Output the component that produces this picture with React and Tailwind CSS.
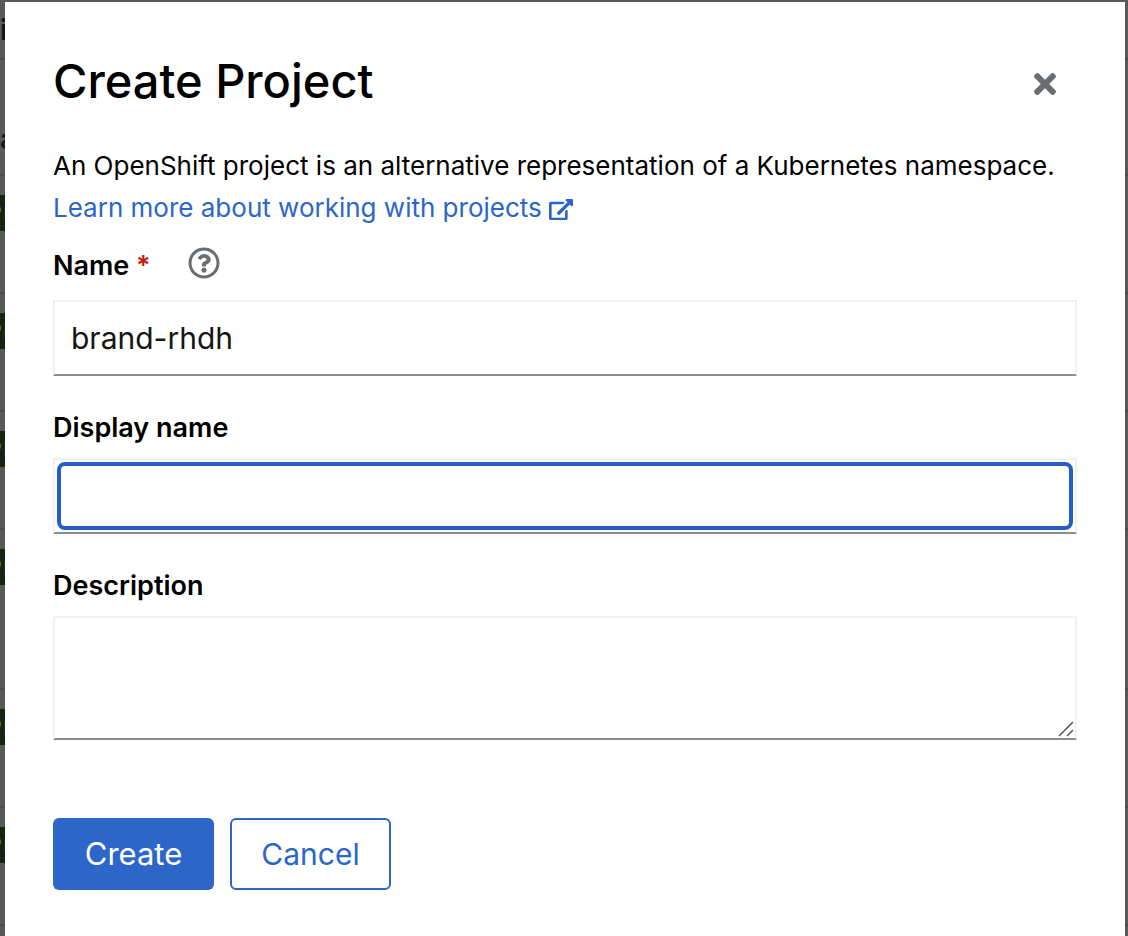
import { FaRegQuestionCircle, FaTimes } from "react-icons/fa";

const rowHeights = ["h-[118px]", "h-[118px]", "h-[118px]", "h-40", "h-[118px]", "h-[118px]", "h-[118px]"];

const boxClass = "w-full border-2 border-t-[#f0f0f0] border-r-[#f0f0f0] border-l-[#f0f0f0] border-b-[#8a8d90] bg-white";
const fieldClass = `block ${boxClass} px-4 text-[30px] text-[#151515] outline-none`;
const labelClass = "text-[27px] leading-[42px] font-semibold text-black";

function ExternalLinkIcon() {
  return (
    <svg
      aria-hidden="true"
      viewBox="0 0 576 512"
      fill="currentColor"
      className="inline-block w-6 align-[-3px]"
    >
      <path d="M576 24v127.984c0 21.461-25.96 31.98-40.971 16.971l-35.707-35.709-243.523 243.523c-9.373 9.373-24.568 9.373-33.941 0l-22.627-22.627c-9.373-9.373-9.373-24.569 0-33.941L442.756 76.676l-35.703-35.705C391.982 25.9 402.656 0 424.024 0H552c13.255 0 24 10.745 24 24zM407.029 270.794l-16 16A23.999 23.999 0 0 0 384 303.765V448H64V128h264a24.003 24.003 0 0 0 16.97-7.029l16-16C376.089 89.851 365.381 64 344 64H48C21.49 64 0 85.49 0 112v352c0 26.51 21.49 48 48 48h352c26.51 0 48-21.49 48-48V287.764c0-21.382-25.852-32.09-40.971-16.97z" />
    </svg>
  );
}

function PageEdge({ side }) {
  const left = side === "left";
  return (
    <div
      aria-hidden="true"
      className={
        left
          ? "w-[5px] shrink-0 overflow-hidden text-[28px] font-semibold text-[#151515]"
          : "w-[3px] shrink-0 overflow-hidden"
      }
    >
      <div className="flex h-14 items-center leading-none">{left && "i"}</div>
      <div className="flex h-[116px] items-end border-t-2 border-[#4b4b4b] pb-[21px] leading-none">
        {left && "a"}
      </div>
      {rowHeights.map((height, i) => (
        <div key={i} className={`${height} border-t-2 border-[#4b4b4b] pt-[19px]`}>
          {left && i < 6 && (
            <div className="flex h-9 items-center justify-center gap-px bg-[#16240f] text-[22px] font-normal text-[#6c6c6c]">
              <span>P</span>
              <span>R</span>
            </div>
          )}
        </div>
      ))}
    </div>
  );
}

export default function App() {
  return (
    <div className="flex h-screen overflow-hidden bg-[#595959] pt-0.5 font-['Inter',sans-serif]">
      <PageEdge side="left" />
      <div role="dialog" aria-labelledby="title" className="min-w-0 flex-1 bg-white px-12 pt-12">
        <header className="flex items-end justify-between">
          <h1 id="title" className="text-[47px] leading-[62px] font-medium text-black">
            Create Project
          </h1>
          <button type="button" aria-label="Close" className="flex h-14 w-16 items-center justify-center text-[#6a6e73]">
            <FaTimes size={32} />
          </button>
        </header>
        <p className="mt-[33px] text-[26px] leading-[42px] text-black">
          An OpenShift project is an alternative representation of a Kubernetes namespace.{" "}
          <a href="#projects" className="block text-[#2b66c8]">
            Learn more about working with projects <ExternalLinkIcon />
          </a>
        </p>
        <form>
          <div className="mt-4 mb-[13px] flex items-center">
            <label htmlFor="name" className={labelClass}>
              Name <span className="text-[#c9190b]">*</span>
            </label>
            <button type="button" aria-label="Help" className="ml-[37px] pb-1.5 text-[#6a6e73]">
              <FaRegQuestionCircle size={32} />
            </button>
          </div>
          <input id="name" type="text" defaultValue="brand-rhdh" className={`${fieldClass} h-19`} />
          <label htmlFor="display-name" className={`${labelClass} mt-[31px] mb-[9px] block`}>
            Display name
          </label>
          <div className={`${boxClass} flex h-19 p-0.5`}>
            <input
              id="display-name"
              type="text"
              className="w-full rounded-lg border-4 border-[#225dc8] px-2 text-[30px] text-[#151515] outline-none"
            />
          </div>
          <label htmlFor="description" className={`${labelClass} mt-[31px] mb-[9px] block`}>
            Description
          </label>
          <div className="relative">
            <textarea id="description" className={`${fieldClass} h-31 resize-none`} />
            <svg
              aria-hidden="true"
              viewBox="0 0 16 16"
              className="pointer-events-none absolute right-[3px] bottom-[3px] size-4"
              fill="none"
              stroke="#5c5c5c"
              strokeWidth="1.7"
            >
              <path d="M1 15 15 1M9 15l6-6" />
            </svg>
          </div>
          <div className="mt-[78px] flex gap-4">
            <button type="submit" className="h-18 min-w-[161px] rounded-md bg-[#2b66c8] px-7 text-[31px] text-white">
              Create
            </button>
            <button
              type="button"
              className="h-18 min-w-[161px] rounded-md border-2 border-[#2b66c8] bg-white px-7 text-[30px] text-[#2b66c8]"
            >
              Cancel
            </button>
          </div>
        </form>
      </div>
      <PageEdge side="right" />
    </div>
  );
}
